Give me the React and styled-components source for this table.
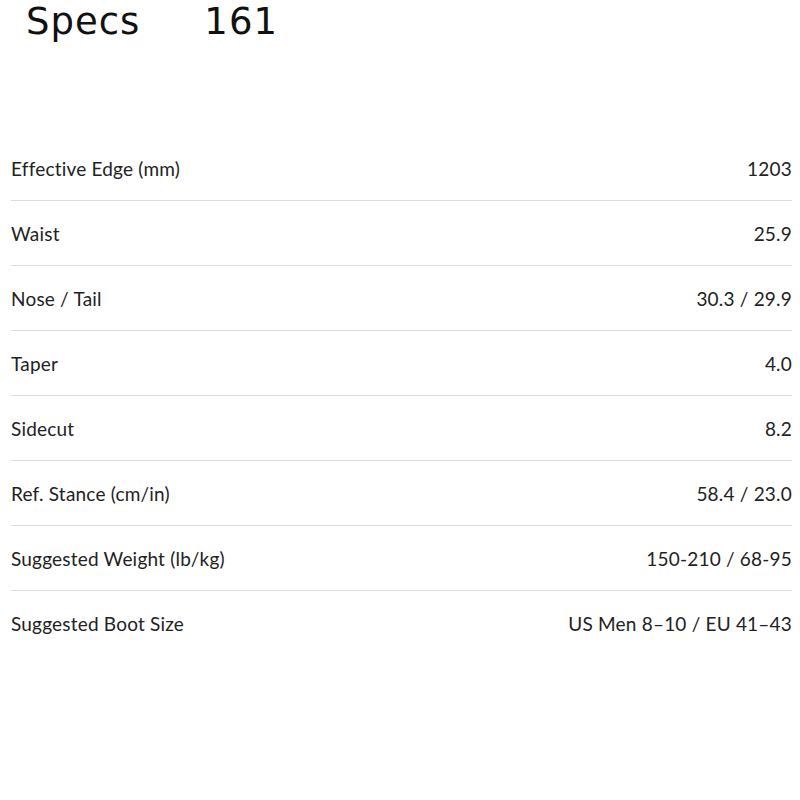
import React from "react"
import styled, { createGlobalStyle } from "styled-components"

const GlobalStyle = createGlobalStyle`
  body {
    margin: 0;
    background: #fff;
  }
`

const Page = styled.div`
  width: 800px;
  height: 800px;
  background: #fff;
`

const Header = styled.h2`
  display: flex;
  gap: 64px;
  margin: 0;
  padding: 0 0 0 26px;
  line-height: 44px;
  font-family: "DejaVu Sans", "Noto Sans CJK JP", sans-serif;
  font-weight: normal;
  font-size: 37px;
  letter-spacing: 1px;
  color: #111;
`

const Table = styled.div`
  margin-top: 92px;
  padding: 0 8px 0 11px;
`

const Row = styled.div`
  display: flex;
  justify-content: space-between;
  align-items: center;
  height: 64px;
  border-bottom: 1px solid ${props => (props.last ? "transparent" : "#dcdcdc")};
  font-family: "Lato", "Liberation Sans", sans-serif;
  font-size: 19px;
  letter-spacing: 0.2px;
  color: #222;
`

const specs = [
  ["Effective Edge (mm)", "1203"],
  ["Waist", "25.9"],
  ["Nose / Tail", "30.3 / 29.9"],
  ["Taper", "4.0"],
  ["Sidecut", "8.2"],
  ["Ref. Stance (cm/in)", "58.4 / 23.0"],
  ["Suggested Weight (lb/kg)", "150-210 / 68-95"],
  ["Suggested Boot Size", "US Men 8–10 / EU 41–43"],
]

export default function App() {
  return (
    <Page>
      <GlobalStyle />
      <Header>
        <span>Specs</span>
        <span>161</span>
      </Header>
      <Table>
        {specs.map(([label, value], i) => (
          <Row key={label} last={i === specs.length - 1}>
            <span>{label}</span>
            <span>{value}</span>
          </Row>
        ))}
      </Table>
    </Page>
  )
}
